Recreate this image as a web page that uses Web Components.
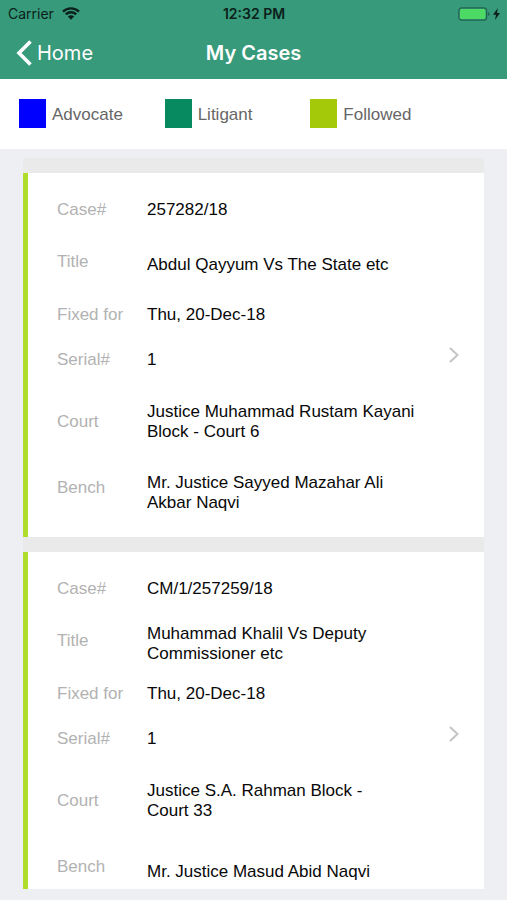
<!DOCTYPE html>
<html lang="en">
<head>
<meta charset="utf-8">
<meta name="viewport" content="width=device-width, initial-scale=1">
<title>My Cases</title>
<style>
  html, body { height: 100%; margin: 0; }
  body { background: #edeff2; color: #080808; font-family: "Liberation Sans", Arial, sans-serif; font-size: 17px; line-height: 20px; }
</style>
</head>
<body>
<cases-screen></cases-screen>

<template id="status-bar">
  <style>
    :host { display: grid; grid-template-columns: 1fr auto 1fr; align-items: center; height: 27px; padding: 0 7px 0 8px; color: #0b211a; font: 14px/18px Inter, sans-serif; }
    .left, .right { display: flex; align-items: center; gap: 8px; }
    .right { justify-content: flex-end; gap: 3px; }
    .time { font-weight: 600; }
    svg { display: block; }
  </style>
  <div class="left"><span>Carrier</span>
    <svg width="18" height="13" viewBox="0 0 18 13" aria-hidden="true">
      <path d="M1 4.6a11.4 11.4 0 0 1 16 0M3.8 7.4a7.4 7.4 0 0 1 10.4 0" fill="none" stroke="#0b211a" stroke-width="2.3"/>
      <path d="M9 12.7 5.9 9.5a4.4 4.4 0 0 1 6.2 0z" fill="#0b211a"/>
    </svg>
  </div>
  <span class="time">12:32 PM</span>
  <div class="right">
    <svg width="32" height="14" viewBox="0 0 32 14" aria-hidden="true">
      <rect x=".8" y=".8" width="27.8" height="12.4" rx="3" fill="none" stroke="#22644f" stroke-width="1.2"/>
      <rect x="2" y="2" width="25.400" height="10" rx="1.5" fill="#4cd964"/>
      <path d="M29.9 5v4c1-.3 1.6-1 1.6-2s-.6-1.700-1.600-2z" fill="#22644f"/>
    </svg>
    <svg width="7" height="12" viewBox="0 0 7 12" aria-hidden="true"><path d="M4.800 0 0 6.700h3L2 12l5-7H4z" fill="#0b211a"/></svg>
  </div>
</template>

<template id="nav-bar">
  <style>
    :host { display: grid; grid-template-columns: 1fr auto 1fr; align-items: center; height: 52px; padding: 0 16px; color: #fff; font-family: Inter, sans-serif; }
    button { justify-self: start; display: flex; align-items: center; gap: 5px; padding: 0; border: 0; background: none; color: inherit; font: 20px/24px Inter, sans-serif; cursor: pointer; }
    h1 { margin: 0; font-size: 20px; line-height: 24px; font-weight: 600; }
    svg { display: block; }
  </style>
  <button type="button">
    <svg width="16" height="26" viewBox="0 0 16 26" aria-hidden="true"><path d="M14.500 1.500 3 13l11.500 11.500" fill="none" stroke="#fff" stroke-width="3.600"/></svg>
    <slot name="back"></slot>
  </button>
  <h1><slot></slot></h1>
</template>

<template id="legend-item">
  <style>
    :host { display: flex; align-items: center; gap: 6px; color: #666; }
    .swatch { width: 27px; height: 29px; background: var(--swatch); }
    .name { padding-top: 2px; }
  </style>
  <span class="swatch"></span><span class="name"><slot></slot></span>
</template>

<template id="case-field">
  <style>
    :host { display: grid; grid-template-columns: 90px 1fr; align-items: center; }
    .label { color: #b2b2b2; }
  </style>
  <span class="label"><slot name="label"></slot></span>
  <span><slot></slot></span>
</template>

<template id="case-card">
  <style>
    :host { display: block; border-top: 15px solid #eaeaea; }
    a { display: grid; grid-template-columns: 1fr 12px; align-items: center; padding: 15px 24px 7px 29px; border-left: 5px solid #b0dc2e; background: #fff; color: inherit; text-decoration: none; }
    .fields { display: grid; grid-template-rows: 44px 66px 34px 56px 68px 74px; padding-right: 20px; }
    .lift-s, .lift-l { display: block; }
    .lift-s { padding-bottom: 6px; }
    .lift-l { padding-bottom: 10px; }
    svg { display: block; padding-bottom: 8px; }
  </style>
  <a href="#">
    <div class="fields">
      <case-field><span slot="label">Case#</span><slot name="number"></slot></case-field>
      <case-field><span slot="label" class="lift-s">Title</span><slot name="title"></slot></case-field>
      <case-field><span slot="label">Fixed for</span><slot name="date"></slot></case-field>
      <case-field><span slot="label">Serial#</span><slot name="serial"></slot></case-field>
      <case-field><span slot="label">Court</span><slot name="court"></slot></case-field>
      <case-field><span slot="label" class="lift-l">Bench</span><slot name="bench"></slot></case-field>
    </div>
    <svg width="12" height="16" viewBox="0 0 12 16" aria-hidden="true"><path d="M2 1l7.500 7L2 15" fill="none" stroke="#c4c4c6" stroke-width="2"/></svg>
  </a>
</template>

<template id="cases-screen">
  <style>
    :host { display: flex; flex-direction: column; height: 100vh; }
    header { background: #379a7b; }
    .legend { display: grid; grid-template-columns: repeat(3, 1fr); padding: 20px 51px 21px 19px; background: #fff; }
    main { flex: 1; min-height: 0; margin: 9px 23px 11px; overflow-y: auto; scrollbar-width: none; }
  </style>
  <header>
    <status-bar></status-bar>
    <nav-bar><span slot="back">Home</span>My Cases</nav-bar>
  </header>
  <div class="legend">
    <legend-item style="--swatch:#0000fe">Advocate</legend-item>
    <legend-item style="--swatch:#088a60">Litigant</legend-item>
    <legend-item style="--swatch:#a4c908">Followed</legend-item>
  </div>
  <main>
    <case-card>
      <span slot="number">257282/18</span>
      <span slot="title">Abdul Qayyum Vs The State etc</span>
      <span slot="date">Thu, 20-Dec-18</span>
      <span slot="serial">1</span>
      <span slot="court">Justice Muhammad Rustam Kayani Block - Court 6</span>
      <span slot="bench">Mr. Justice Sayyed Mazahar Ali Akbar Naqvi</span>
    </case-card>
    <case-card>
      <span slot="number">CM/1/257259/18</span>
      <span slot="title">Muhammad Khalil Vs Deputy Commissioner etc</span>
      <span slot="date">Thu, 20-Dec-18</span>
      <span slot="serial">1</span>
      <span slot="court">Justice S.A. Rahman Block - Court&nbsp;33</span>
      <span slot="bench">Mr. Justice Masud Abid Naqvi</span>
    </case-card>
  </main>
</template>

<script>
  class TemplateElement extends HTMLElement {
    constructor() {
      super();
      const template = document.getElementById(this.localName);
      this.attachShadow({ mode: "open" }).append(template.content.cloneNode(true));
    }
  }
  for (const name of ["status-bar", "nav-bar", "legend-item", "case-field", "case-card", "cases-screen"]) {
    customElements.define(name, class extends TemplateElement {});
  }
</script>
</body>
</html>
